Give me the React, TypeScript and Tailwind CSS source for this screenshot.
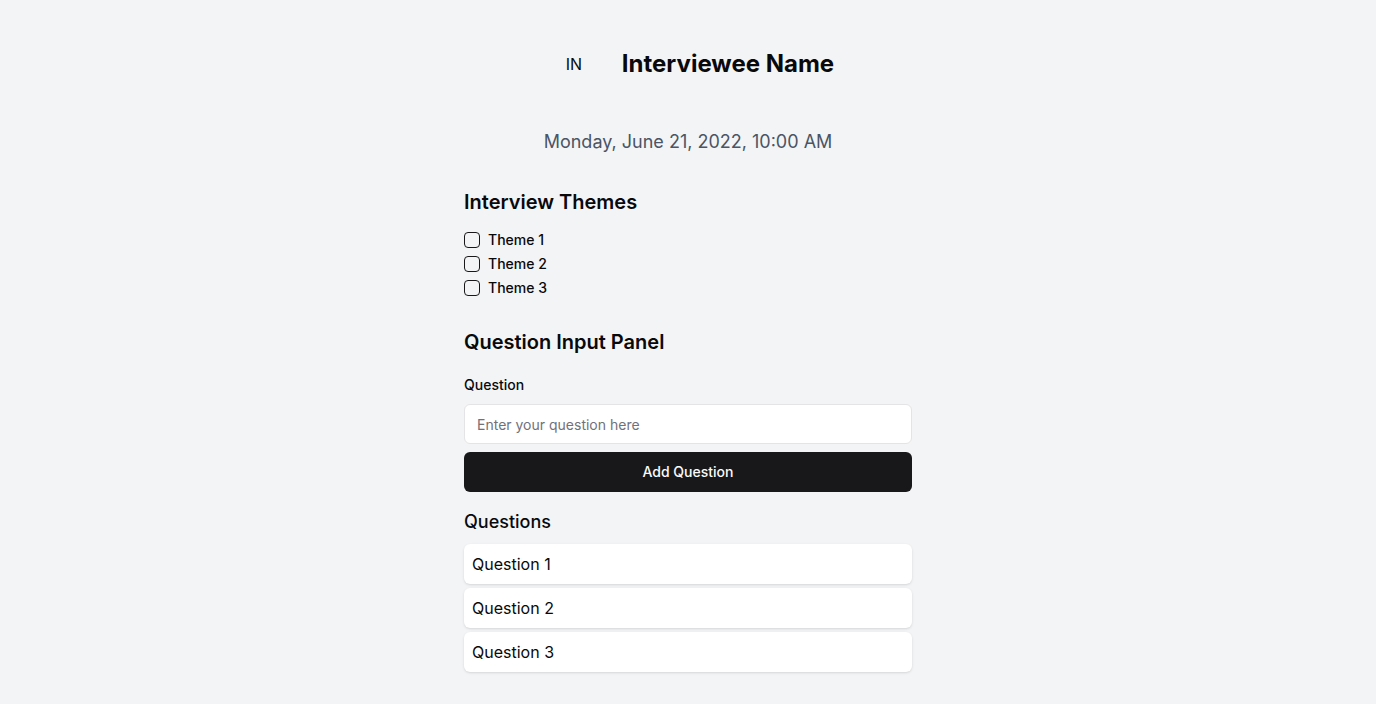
export default function App() {
  const themes = ['Theme 1', 'Theme 2', 'Theme 3']
  const questions = ['Question 1', 'Question 2', 'Question 3']

  return (
    <div className="min-h-screen bg-gray-100 font-['Inter',sans-serif] text-[#09090b]">
      <div className="mx-auto w-[448px] pt-8 pb-8">
        <header className="flex items-center justify-center gap-4">
          <div className="flex h-16 w-16 items-center justify-center rounded-full text-base">IN</div>
          <h1 className="text-2xl font-bold">Interviewee Name</h1>
        </header>

        <p className="mt-8 text-center text-lg text-gray-600">Monday, June 21, 2022, 10:00 AM</p>

        <section className="mt-8">
          <h2 className="text-xl font-semibold">Interview Themes</h2>
          <div className="mt-[14px] flex flex-col gap-1">
            {themes.map((t) => (
              <label key={t} className="flex items-center gap-2 text-sm font-medium">
                <span className="h-4 w-4 rounded-[4px] border border-[#18181b] bg-transparent" />
                {t}
              </label>
            ))}
          </div>
        </section>

        <section className="mt-[30px]">
          <h2 className="text-xl font-semibold">Question Input Panel</h2>
          <label className="mt-[19px] block text-sm font-medium">Question</label>
          <input
            placeholder="Enter your question here"
            className="mt-[9px] h-10 w-full rounded-md border border-[#e4e4e7] bg-white px-3 text-sm placeholder:text-[#71717a] outline-none"
          />
          <button className="mt-2 h-10 w-full rounded-md bg-[#18181b] text-sm font-medium text-[#fafafa]">
            Add Question
          </button>
        </section>

        <section className="mt-4">
          <h3 className="text-lg font-medium">Questions</h3>
          <ul className="mt-2 flex flex-col gap-1">
            {questions.map((q) => (
              <li key={q} className="flex h-10 items-center rounded-md bg-white px-2 text-base shadow-sm">
                {q}
              </li>
            ))}
          </ul>
        </section>
      </div>
    </div>
  )
}
